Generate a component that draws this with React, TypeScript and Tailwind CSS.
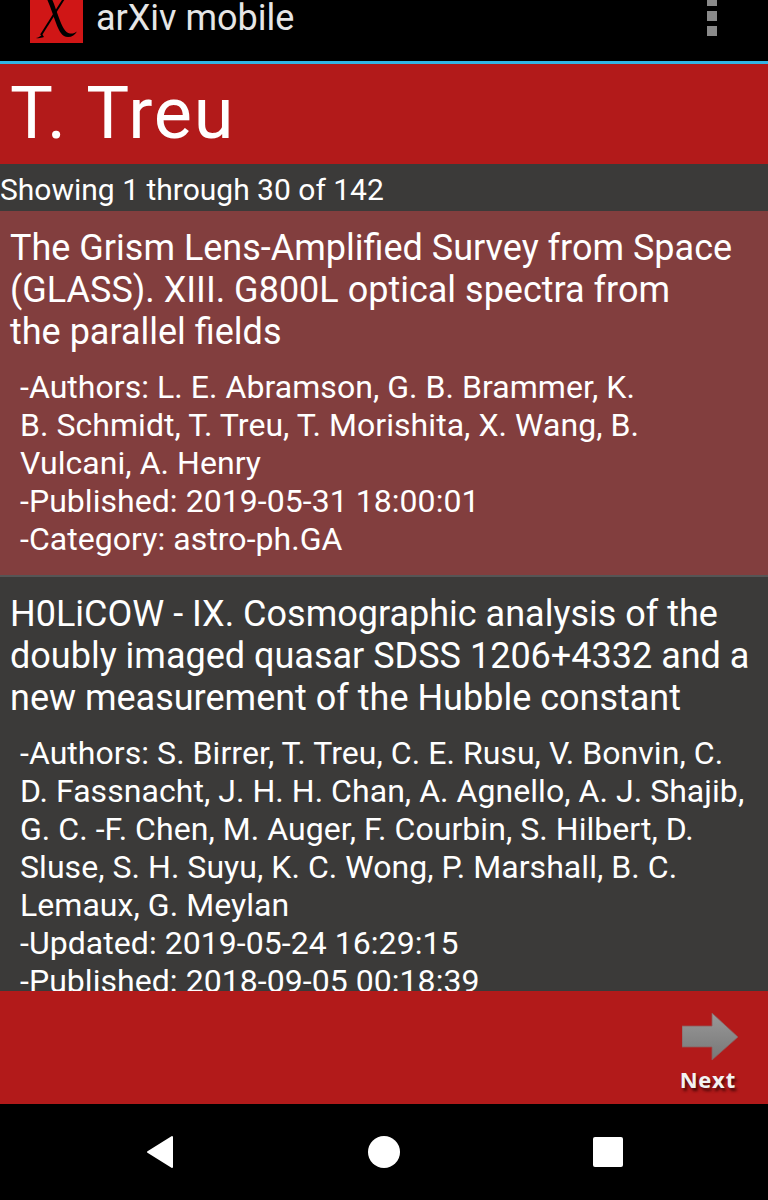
const ITEMS = [
  {
    title: [
      "The Grism Lens-Amplified Survey from Space",
      "(GLASS). XIII. G800L optical spectra from",
      "the parallel fields",
    ],
    lines: [
      "-Authors: L. E. Abramson, G. B. Brammer, K.",
      "B. Schmidt, T. Treu, T. Morishita, X. Wang, B.",
      "Vulcani, A. Henry",
      "-Published: 2019-05-31 18:00:01",
      "-Category: astro-ph.GA",
    ],
    highlighted: true,
  },
  {
    title: [
      "H0LiCOW - IX. Cosmographic analysis of the",
      "doubly imaged quasar SDSS 1206+4332 and a",
      "new measurement of the Hubble constant",
    ],
    lines: [
      "-Authors: S. Birrer, T. Treu, C. E. Rusu, V. Bonvin, C.",
      "D. Fassnacht, J. H. H. Chan, A. Agnello, A. J. Shajib,",
      "G. C. -F. Chen, M. Auger, F. Courbin, S. Hilbert, D.",
      "Sluse, S. H. Suyu, K. C. Wong, P. Marshall, B. C.",
      "Lemaux, G. Meylan",
      "-Updated: 2019-05-24 16:29:15",
      "-Published: 2018-09-05 00:18:39",
      "-Category: astro-ph.CO",
    ],
    highlighted: false,
  },
];

function ArxivLogo() {
  return (
    <svg viewBox="0 0 53 43" className="h-[43px] w-[53px] shrink-0">
      <rect width="53" height="43" fill="#d01616" />
      <path d="M16 -3 H21 C24 3 26 10 29 18 C32 26 35 33 40 33.500 C43 33.800 45 33 47 31.500 C45 35 42 37 38 37 C32 37 29 31 26 23 C23 15 20 5 16 -3 Z" fill="#000" />
      <path d="M35 -3 L11 35" fill="none" stroke="#000" strokeWidth="2" />
      <path d="M6 38 C9 37.500 11 36 12 34 L14 37 C11 38 9 38.500 6 38 Z" fill="#000" />
    </svg>
  );
}

function ArticleRow({ title, lines, highlighted }: { title: string[]; lines: string[]; highlighted: boolean }) {
  return (
    <div className={highlighted ? "bg-[#823e3e] pt-[16px] pb-[17px]" : "bg-[#3b3a39] pt-[16px] pb-[17px]"}>
      <h2 className="pl-[10px] text-[36px] leading-[42px] whitespace-nowrap text-white">
        {title.map((line) => (
          <div key={line}>{line}</div>
        ))}
      </h2>
      <div className="mt-[15px] pl-[20px] text-[32px] leading-[38px] whitespace-nowrap text-white">
        {lines.map((line) => (
          <p key={line} className="tracking-[0.05px]">{line}</p>
        ))}
      </div>
    </div>
  );
}

export default function App() {
  return (
    <div className="flex h-[1200px] w-[768px] flex-col overflow-hidden bg-black font-['Roboto',sans-serif]">
      <header className="flex h-[61px] shrink-0 items-start bg-black">
        <div className="ml-[30px]">
          <ArxivLogo />
        </div>
        <span className="ml-[13px] text-[36px] leading-[36px] text-[#e6e6e6]">arXiv mobile</span>
        <div className="ml-auto mr-[51px] flex flex-col gap-[5px]">
          <div className="mt-[-4px] h-[10px] w-[10px] bg-[#8a8a8a]" />
          <div className="h-[10px] w-[10px] bg-[#8a8a8a]" />
          <div className="h-[10px] w-[10px] bg-[#8a8a8a]" />
        </div>
      </header>
      <div className="h-[3px] shrink-0 bg-[#33b5e5]" />

      <div className="flex h-[100px] shrink-0 items-center bg-[#b21a1a] pl-[10px]">
        <h1 className="text-[72px] leading-[94px] tracking-[1.8px] text-white">T. Treu</h1>
      </div>

      <div className="flex h-[47px] shrink-0 items-center bg-[#3b3a39] pt-[3px] text-[30px] text-white">Showing 1 through 30 of 142</div>

      <main className="flex min-h-0 flex-1 flex-col gap-[2px] overflow-hidden bg-[#555]">
        {ITEMS.map((item) => (
          <ArticleRow key={item.title[0]} {...item} />
        ))}
      </main>

      <footer className="flex h-[113px] shrink-0 flex-col items-end bg-[#b21a1a] pr-[30px] pt-[22px]">
        <div className="flex flex-col items-center">
          <svg viewBox="0 0 56 48" className="h-[48px] w-[56px]">
            <defs>
              <linearGradient id="nextArrow" x1="0" y1="0" x2="0" y2="1">
                <stop offset="0" stopColor="#999" />
                <stop offset="1" stopColor="#777" />
              </linearGradient>
            </defs>
            <path d="M0 13 H30 V0 L56 24 L30 47 V34 H0 Z" fill="url(#nextArrow)" stroke="#8f5a5a" strokeWidth="0.800" />
          </svg>
          <span className="mt-[5px] -translate-x-[2px] font-['Open_Sans',sans-serif] text-[22px] leading-[26px] font-bold tracking-[0.8px] text-[#f2f2f2] [text-shadow:2px_3px_3px_#4a0808]">
            Next
          </span>
        </div>
      </footer>

      <nav className="flex h-[96px] shrink-0 items-center bg-black">
        <svg viewBox="0 0 28 34" className="ml-[146px] h-[34px] w-[28px]">
          <path d="M26 2 V32 L2 17 Z" fill="#fff" stroke="#fff" strokeWidth="2" strokeLinejoin="round" />
        </svg>
        <div className="ml-[194px] h-[32px] w-[32px] rounded-full bg-white" />
        <div className="ml-[193px] h-[30px] w-[30px] rounded-[2px] bg-white" />
      </nav>
    </div>
  );
}
